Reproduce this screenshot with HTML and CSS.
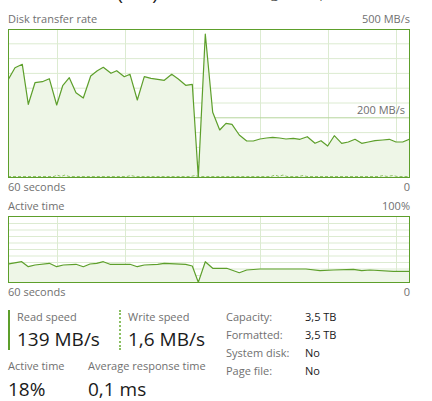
FILE: index.html
```html
<!DOCTYPE html>
<html lang="en">
<head>
    <meta charset="UTF-8">
    <meta name="viewport" content="width=device-width, initial-scale=1.0">
    <title>Disk</title>
    <link rel="stylesheet" href="styles.css">
</head>
<body>
    <div class="panel">
        <div class="title">
            <span class="title-main">Disk 1 (D:)</span>
            <span class="title-model">Seagate Expansion Desk</span>
        </div>

        <div class="graph-head graph-head-first">
            <span>Disk transfer rate</span>
            <span>500 MB/s</span>
        </div>
        <div class="graph graph-big">
            <svg viewBox="0 0 400 147" preserveAspectRatio="none">
                <g class="grid">
                    <line x1="0" y1="13.8" x2="400" y2="13.8"/>
                    <line x1="0" y1="28.6" x2="400" y2="28.6"/>
                    <line x1="0" y1="43.4" x2="400" y2="43.4"/>
                    <line x1="0" y1="58.2" x2="400" y2="58.2"/>
                    <line x1="0" y1="73" x2="400" y2="73"/>
                    <line x1="0" y1="102.6" x2="400" y2="102.6"/>
                    <line x1="0" y1="117.4" x2="400" y2="117.4"/>
                    <line x1="0" y1="132.2" x2="400" y2="132.2"/>
                    <line x1="48.5" y1="0" x2="48.5" y2="147"/>
                    <line x1="116.5" y1="0" x2="116.5" y2="147"/>
                    <line x1="184.5" y1="0" x2="184.5" y2="147"/>
                    <line x1="251.5" y1="0" x2="251.5" y2="147"/>
                    <line x1="319.5" y1="0" x2="319.5" y2="147"/>
                    <line x1="387.5" y1="0" x2="387.5" y2="147"/>
                </g>
                <line class="scale-line" x1="0" y1="87.8" x2="400" y2="87.8"/>
                <polygon class="area" points="-1,147 -1,50 6,37.7 13.3,34.3 19.3,74.3 26,52.7 33.3,51.7 40.3,48.7 47.7,75 53.7,55.7 60.3,47.7 67,62.7 74.3,68 81.7,46 88.3,40.7 94.3,37.3 102,43.3 107.7,40.7 115.3,46.7 121,44.3 128.3,70 135.3,46.7 142,48.3 148.7,49.3 155.3,50.3 162.7,44.3 169.3,49 176.7,55.3 183.3,54.3 189.3,147.3 196.3,4 203.7,82.3 210.7,100 217,93.3 223,94.3 230.3,105 237.7,111 244.3,111 251,109 257.5,108 263.7,107.3 270.5,108 277,109 284.3,108.3 291,109.3 298.3,106.7 306,113.3 312,110.7 318.7,116 325.3,105.7 332.7,113.3 339.3,112 346,109.3 352.7,113.3 359.3,112 366,110.7 373.7,110 380.3,109.3 387,112 393.7,112 400.3,109.3 401,147"/>
                <polyline class="write" points="-1,146.5 45,146.5 48,145 52,146.5 56,145 60,146.5 118,146.5 122,145.5 126,146.5 182,146.5 186,145.5 190,146.5 262,146.5 266,145 270,146.5 274,145 278,146.5 290,146.5 294,145.5 298,146.5 370,146.5 374,145.5 378,146.5 384,145.5 388,146.5 401,146.5"/>
                <polyline class="read" points="-1,50 6,37.7 13.3,34.3 19.3,74.3 26,52.7 33.3,51.7 40.3,48.7 47.7,75 53.7,55.7 60.3,47.7 67,62.7 74.3,68 81.7,46 88.3,40.7 94.3,37.3 102,43.3 107.7,40.7 115.3,46.7 121,44.3 128.3,70 135.3,46.7 142,48.3 148.7,49.3 155.3,50.3 162.7,44.3 169.3,49 176.7,55.3 183.3,54.3 189.3,147.3 196.3,4 203.7,82.3 210.7,100 217,93.3 223,94.3 230.3,105 237.7,111 244.3,111 251,109 257.5,108 263.7,107.3 270.5,108 277,109 284.3,108.3 291,109.3 298.3,106.7 306,113.3 312,110.7 318.7,116 325.3,105.7 332.7,113.3 339.3,112 346,109.3 352.7,113.3 359.3,112 366,110.7 373.7,110 380.3,109.3 387,112 393.7,112 400.3,109.3"/>
            </svg>
            <span class="scale-label">200 MB/s</span>
        </div>
        <div class="graph-foot">
            <span>60 seconds</span>
            <span>0</span>
        </div>

        <div class="graph-head">
            <span>Active time</span>
            <span>100%</span>
        </div>
        <div class="graph graph-small">
            <svg viewBox="0 0 400 65" preserveAspectRatio="none">
                <g class="grid">
                    <line x1="0" y1="6.5" x2="400" y2="6.5"/>
                    <line x1="0" y1="13" x2="400" y2="13"/>
                    <line x1="0" y1="19.5" x2="400" y2="19.5"/>
                    <line x1="0" y1="26" x2="400" y2="26"/>
                    <line x1="0" y1="32.5" x2="400" y2="32.5"/>
                    <line x1="0" y1="39" x2="400" y2="39"/>
                    <line x1="0" y1="45.5" x2="400" y2="45.5"/>
                    <line x1="0" y1="52" x2="400" y2="52"/>
                    <line x1="0" y1="58.5" x2="400" y2="58.5"/>
                    <line x1="48.5" y1="0" x2="48.5" y2="65"/>
                    <line x1="116.5" y1="0" x2="116.5" y2="65"/>
                    <line x1="184.5" y1="0" x2="184.5" y2="65"/>
                    <line x1="251.5" y1="0" x2="251.5" y2="65"/>
                    <line x1="319.5" y1="0" x2="319.5" y2="65"/>
                    <line x1="387.5" y1="0" x2="387.5" y2="65"/>
                </g>
                <polygon class="area" points="-1,66 -1,47 12.7,44.7 19.3,49.7 26,48 40.3,46.3 47.7,49.7 54.3,48 67,47.3 74.3,49.7 81,47 87.7,46.3 94.3,44.7 101,47.3 121,47.3 128.3,49.7 135.3,48 148.7,47.3 155.3,46.3 176.7,47.3 183.3,49 189.3,65.3 196.3,44.7 203.7,51.3 217.7,51.3 230.3,55.7 237.7,53 251,52 297,52 311,53.7 324.3,53 344.3,52.3 352.7,53.7 361,53 384.3,54.3 401,54.3 401,66"/>
                <polyline class="read" points="-1,47 12.7,44.7 19.3,49.7 26,48 40.3,46.3 47.7,49.7 54.3,48 67,47.3 74.3,49.7 81,47 87.7,46.3 94.3,44.7 101,47.3 121,47.3 128.3,49.7 135.3,48 148.7,47.3 155.3,46.3 176.7,47.3 183.3,49 189.3,65.3 196.3,44.7 203.7,51.3 217.7,51.3 230.3,55.7 237.7,53 251,52 297,52 311,53.7 324.3,53 344.3,52.3 352.7,53.7 361,53 384.3,54.3 401,54.3"/>
            </svg>
        </div>
        <div class="graph-foot">
            <span>60 seconds</span>
            <span>0</span>
        </div>

        <div class="stats">
            <div class="stats-left">
                <div class="stat-row">
                    <div class="stat stat-read">
                        <div class="stat-label">Read speed</div>
                        <div class="stat-value">139 MB/s</div>
                    </div>
                    <div class="stat stat-write">
                        <div class="stat-label">Write speed</div>
                        <div class="stat-value">1,6 MB/s</div>
                    </div>
                </div>
                <div class="stat-row stat-row-plain">
                    <div class="stat stat-plain stat-active">
                        <div class="stat-label">Active time</div>
                        <div class="stat-value">18%</div>
                    </div>
                    <div class="stat stat-plain">
                        <div class="stat-label">Average response time</div>
                        <div class="stat-value">0,1 ms</div>
                    </div>
                </div>
            </div>
            <dl class="props">
                <dt>Capacity:</dt><dd>3,5 TB</dd>
                <dt>Formatted:</dt><dd>3,5 TB</dd>
                <dt>System disk:</dt><dd>No</dd>
                <dt>Page file:</dt><dd>No</dd>
            </dl>
        </div>
    </div>
</body>
</html>
```

FILE: styles.css
```css
* {
    margin: 0;
    padding: 0;
    box-sizing: border-box;
}
body {
    background: #fff;
    font-family: "Open Sans", "Noto Sans", sans-serif;
    color: #707070;
    overflow: hidden;
}
.panel {
    width: 418px;
    padding-left: 8px;
}
/* only the bottom of the heading is on screen */
.title {
    height: 9px;
    overflow: hidden;
    display: flex;
    justify-content: space-between;
    align-items: flex-start;
    color: #1a1a1a;
    font-weight: 300;
    width: 402px;
}
.title-main {
    font-size: 30px;
    line-height: 30px;
    margin-top: -28px;
    margin-left: 18px;
}
.title-model {
    font-size: 15px;
    line-height: 15px;
    margin-top: -15px;
}
.graph-head,
.graph-foot {
    width: 402px;
    display: flex;
    justify-content: space-between;
    font-size: 11px;
    line-height: 15px;
    height: 19px;
    padding-top: 1px;
}
.graph-head-first {
    height: 20px;
    padding-top: 2px;
}
.graph {
    width: 402px;
    border: 1px solid #5d9f2b;
    background: #fff;
    position: relative;
}
.graph svg {
    display: block;
    width: 400px;
}
.graph-big {
    height: 149px;
}
.graph-big svg {
    height: 147px;
}
.graph-small {
    height: 67px;
}
.graph-small svg {
    height: 65px;
}
.grid line {
    stroke: #dcebd1;
    stroke-width: 1;
}
.scale-line {
    stroke: #b6d59c;
    stroke-width: 1;
}
.area {
    fill: #eef6e7;
}
.read {
    fill: none;
    stroke: #5d9f2b;
    stroke-width: 1.2;
    stroke-linejoin: round;
}
.write {
    fill: none;
    stroke: #8cc063;
    stroke-width: 1;
    stroke-dasharray: 3 2;
}
.scale-label {
    position: absolute;
    right: 4px;
    top: 72px;
    font-size: 11px;
    line-height: 15px;
    color: #707070;
}
.stats {
    display: flex;
    align-items: flex-start;
    padding-top: 8px;
}
.stats-left {
    width: 218px;
}
.stat-row {
    display: flex;
}
.stat {
    padding-left: 7px;
    height: 40px;
}
.stat-read {
    border-left: 2px solid #5d9f2b;
    width: 111px;
}
.stat-write {
    border-left: 2px dotted #8cc063;
}
.stat-row-plain {
    margin-top: 9px;
}
.stat-plain {
    padding-left: 0;
    height: auto;
}
.stat-active {
    width: 80px;
}
.stat-label {
    font-size: 11px;
    line-height: 13px;
}
.stat-value {
    font-size: 19px;
    line-height: 24px;
    margin-top: 4px;
    color: #1a1a1a;
}
.stat-plain .stat-value {
    margin-top: 5px;
}
.props {
    display: grid;
    grid-template-columns: 79px auto;
    row-gap: 5px;
    font-size: 11px;
    line-height: 13px;
}
.props dd {
    color: #1a1a1a;
}
```
